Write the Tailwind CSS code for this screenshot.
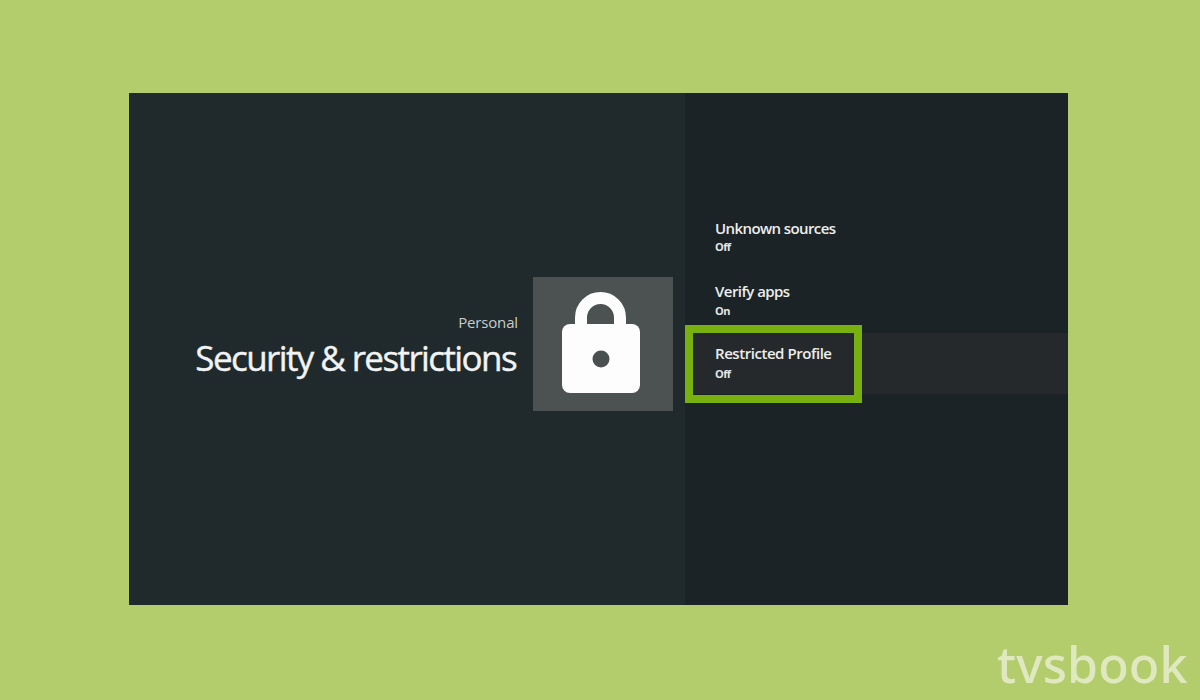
<!DOCTYPE html>
<html>
<head>
<meta charset="utf-8">
<script src="https://cdn.jsdelivr.net/npm/@tailwindcss/browser@4"></script>
</head>
<body class="m-0">
<div class="relative w-[1200px] h-[700px] bg-[#b3cd6c] pt-[93px] pl-[129px] overflow-hidden font-['Open_Sans',sans-serif]">
  <div class="flex w-[939px] h-[512px]">
    <div class="w-[556px] h-full bg-[#20292b] flex items-start justify-end pr-[12px] pt-[184px]">
      <div class="flex flex-col items-end pt-[35px]">
        <div class="text-[15px] leading-[20px] tracking-[-0.15px] text-[#c9cccc] mr-[-1px]">Personal</div>
        <div class="text-[35px] leading-[46px] tracking-[-1.6px] text-[#f2f3f3] mt-[3px] mr-[1px] [-webkit-text-stroke:0.4px_#f2f3f3]">Security &amp; restrictions</div>
      </div>
      <div class="w-[140px] h-[134px] ml-[16px] bg-[#4c5152] flex items-start pl-[28px] pt-[15px] shrink-0">
        <svg width="80" height="101" viewBox="0 0 80 101">
          <path d="M20 40V25.5a19.5 19.5 0 0 1 39 0V40" fill="none" stroke="#fdfdfd" stroke-width="12"/>
          <rect x="1" y="32" width="78" height="69" rx="8" fill="#fdfdfd"/>
          <circle cx="40" cy="67" r="8.5" fill="#4a4f50"/>
        </svg>
      </div>
    </div>
    <div class="w-[383px] h-full bg-[#1c2326] flex flex-col pt-[125px]">
      <div class="pl-[30px] h-[63px]">
        <div class="text-[15px] leading-[20px] font-semibold tracking-[-0.6px] text-[#eceeee]">Unknown sources</div>
        <div class="text-[11px] leading-[14px] font-bold tracking-[-0.6px] text-[#e4e6e6] mt-[2px]">Off</div>
      </div>
      <div class="pl-[30px] h-[51px]">
        <div class="text-[15px] leading-[20px] font-semibold tracking-[-0.55px] text-[#eceeee]">Verify apps</div>
        <div class="text-[11px] leading-[14px] font-bold tracking-[-0.6px] text-[#e4e6e6] mt-[3px]">On</div>
      </div>
      <div class="relative h-[61px] bg-[#25292c] pl-[30px] mt-[1px]">
        <div class="text-[15px] leading-[20px] font-semibold tracking-[-0.45px] text-[#eceeee] mt-[10px]">Restricted Profile</div>
        <div class="text-[11px] leading-[14px] font-bold tracking-[-0.6px] text-[#e4e6e6] mt-[4px]">Off</div>
        <div class="absolute left-0 top-[-8px] w-[177px] h-[78px] border-[8px] border-[#78b010]"></div>
      </div>
    </div>
  </div>
  <div class="absolute left-[997px] top-[634px] text-[50px] leading-[60px] tracking-[0.1px] font-medium text-[#dfe8bf] font-['Noto_Sans',sans-serif]">tvsbook</div>
</div>
</body>
</html>
